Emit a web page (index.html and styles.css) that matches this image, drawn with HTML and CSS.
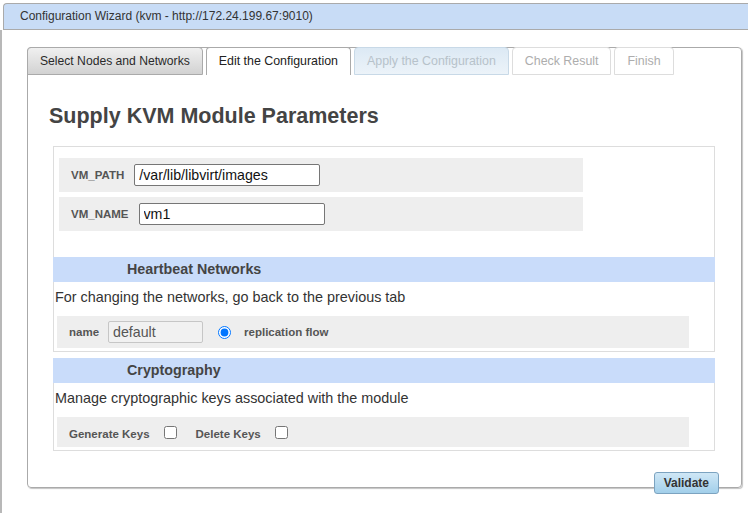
FILE: index.html
```html
<!DOCTYPE html>
<html>
<head>
<meta charset="utf-8">
<link rel="stylesheet" href="styles.css">
</head>
<body>
<div class="dialog">
  <div class="titlebar">Configuration Wizard (kvm - http://172.24.199.67:9010)</div>
  <div class="dlg-body">
    <div class="tabs">
      <ul class="tabnav">
        <li class="tab tab-done">Select Nodes and Networks</li>
        <li class="tab tab-active">Edit the Configuration</li>
        <li class="tab tab-next">Apply the Configuration</li>
        <li class="tab tab-off">Check Result</li>
        <li class="tab tab-off">Finish</li>
      </ul>
      <div class="tabpanel">
        <h2 class="title">Supply KVM Module Parameters</h2>
        <div class="sections">
          <div class="box params">
            <div class="row param-row">
              <span class="lbl">VM_PATH</span>
              <input class="txt" type="text" value="/var/lib/libvirt/images">
            </div>
            <div class="row param-row">
              <span class="lbl">VM_NAME</span>
              <input class="txt" type="text" value="vm1">
            </div>
          </div>
          <div class="box section">
            <div class="sec-head">Heartbeat Networks</div>
            <p class="sec-desc">For changing the networks, go back to the previous tab</p>
            <div class="row sec-row net-row">
              <span class="lbl">name</span>
              <input class="txt ro" type="text" value="default" readonly>
              <input class="radio" type="radio" checked>
              <span class="lbl">replication flow</span>
            </div>
          </div>
          <div class="box section crypto">
            <div class="sec-head">Cryptography</div>
            <p class="sec-desc">Manage cryptographic keys associated with the module</p>
            <div class="row sec-row key-row">
              <span class="lbl">Generate Keys</span>
              <input class="chk" type="checkbox">
              <span class="lbl lbl-del">Delete Keys</span>
              <input class="chk" type="checkbox">
            </div>
          </div>
        </div>
      </div>
    </div>
    <div class="buttonpane"><button class="btn">Validate</button></div>
  </div>
</div>
</body>
</html>
```

FILE: styles.css
```css
html, body {
  margin: 0;
  padding: 0;
  background: #fff;
  font-family: "Liberation Sans", Arial, sans-serif;
}

.dialog {
  padding-top: 3px;
  height: 513px;
  box-sizing: border-box;
  overflow: hidden;
}

.titlebar {
  margin-left: 3px;
  height: 25px;
  border: 1px solid #aaa;
  border-right: 0;
  border-top-left-radius: 4px;
  background: #c8dcf6;
  color: #333;
  font-size: 12px;
  line-height: 25px;
  padding-left: 16px;
}

.dlg-body {
  border-left: 2px solid #b8b8b8;
  padding: 17px 0 0 25px;
  height: 483px;
  box-sizing: border-box;
}

.tabs {
  width: 715px;
  height: 441px;
  box-sizing: border-box;
  border: 1px solid #aaa;
  border-radius: 4px;
  box-shadow: 1px 1px 1px #c4c4c4;
}

.tabnav {
  display: flex;
  gap: 3px;
  list-style: none;
  margin: -1px 0 0 -1px;
  padding: 0;
}

.tab {
  height: 28px;
  box-sizing: border-box;
  border: 1px solid #aaa;
  border-radius: 4px 4px 0 0;
  padding: 0 12px;
  font-size: 12.4px;
  line-height: 26px;
  white-space: nowrap;
}

.tab-done {
  background: linear-gradient(#f0f0f0, #d2d2d2);
  color: #2a2a2a;
  font-size: 12.15px;
}

.tab-active {
  background: #fff;
  border-bottom: 0;
  color: #222;
}

.tab-next {
  background: linear-gradient(#dce9f4, #ecf3f9);
  border-color: #c8d9e7;
  color: #b7c2ca;
}

.tab-off {
  background: #fff;
  border-color: #ddd;
  color: #adadad;
}

.tabpanel {
  padding: 0 26px 0 20px;
}

.title {
  margin: 28px 0 17px 1px;
  font-size: 21.5px;
  line-height: 26px;
  font-weight: bold;
  color: #444;
}

.sections {
  margin-left: 5px;
}

.box {
  border: 1px solid #ddd;
}

.params {
  border-bottom: 0;
  padding: 11px 5px 26px;
  display: flex;
  flex-direction: column;
  gap: 5px;
}

.row {
  background: #eee;
  display: flex;
  align-items: center;
  box-sizing: border-box;
  padding-left: 12px;
}

.param-row {
  width: 524px;
  height: 34px;
  gap: 10px;
}

.lbl {
  font-size: 11.5px;
  font-weight: bold;
  color: #555;
  white-space: nowrap;
}

.txt {
  width: 186px;
  height: 22px;
  box-sizing: border-box;
  border: 1px solid #767676;
  border-radius: 2px;
  padding: 0 4px;
  margin: 0;
  font-family: "Liberation Sans", Arial, sans-serif;
  font-size: 14.2px;
  color: #111;
  background: #fff;
}

.section {
  border-top: 0;
  padding-bottom: 3px;
}

.sec-head {
  margin: 0 -1px;
  height: 25px;
  background: #c9dcfa;
  color: #444;
  font-size: 14.3px;
  font-weight: bold;
  line-height: 25px;
  padding-left: 74px;
}

.sec-desc {
  margin: 7px 0 11px;
  padding-left: 1px;
  font-size: 14.4px;
  line-height: 16px;
  color: #333;
}

.sec-row {
  margin: 0 25px 0 3px;
}

.net-row {
  height: 32px;
}

.ro {
  width: 95px;
  margin-left: 9px;
  border-color: #c6c6c6;
  background: #f1f1f1;
  color: #555;
}

.radio {
  width: 13px;
  height: 13px;
  margin: 0 13px 0 15px;
}

.crypto {
  margin-top: 6px;
}

.crypto .sec-desc {
  margin-bottom: 11px;
}

.key-row {
  height: 30px;
}

.key-row .lbl {
  margin-top: 4px;
}

.chk {
  width: 13px;
  height: 13px;
  margin: 0 0 0 14px;
}

.key-row .lbl-del {
  margin-left: 19px;
}

.buttonpane {
  width: 715px;
  display: flex;
  justify-content: flex-end;
  box-sizing: border-box;
  padding-right: 23px;
  margin-top: -16px;
}

.btn {
  height: 22px;
  box-sizing: border-box;
  border: 1px solid #7ca3c0;
  border-radius: 3px;
  background: linear-gradient(#cfe7f6, #a2cfea);
  color: #333;
  font-family: "Liberation Sans", Arial, sans-serif;
  font-size: 12px;
  font-weight: bold;
  padding: 0 9px;
  margin: 0;
}
```
